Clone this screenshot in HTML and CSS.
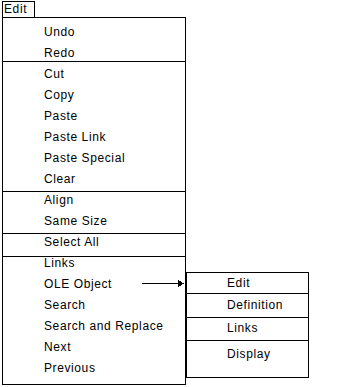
FILE: index.html
```html
<!DOCTYPE html>
<html lang="en">
<head>
<meta charset="utf-8">
<title>Edit menu</title>
<link rel="stylesheet" href="styles.css">
</head>
<body>
<div class="page">
  <div class="tab">Edit</div>
  <div class="menu">
    <div class="group">
      <div class="item">Undo</div>
      <div class="item">Redo</div>
    </div>
    <div class="group g2">
      <div class="item">Cut</div>
      <div class="item">Copy</div>
      <div class="item">Paste</div>
      <div class="item">Paste Link</div>
      <div class="item">Paste Special</div>
      <div class="item">Clear</div>
    </div>
    <div class="group g3">
      <div class="item">Align</div>
      <div class="item">Same Size</div>
    </div>
    <div class="group g4">
      <div class="item">Select All</div>
    </div>
    <div class="group g5">
      <div class="item">Links</div>
      <div class="item item-sub">
        <span>OLE Object</span>
        <svg class="arrow" width="42" height="21" viewBox="0 0 42 21" aria-hidden="true">
          <line x1="0" y1="9.5" x2="37" y2="9.5" stroke="#000" stroke-width="1"/>
          <polygon points="36,6 42,9.5 36,13" fill="#000"/>
        </svg>
      </div>
      <div class="item">Search</div>
      <div class="item">Search and Replace</div>
      <div class="item">Next</div>
      <div class="item">Previous</div>
    </div>
    <div class="submenu">
      <div class="sub-item s-edit">Edit</div>
      <div class="sub-item s-def">Definition</div>
      <div class="sub-item s-links">Links</div>
      <div class="sub-item s-display">Display</div>
    </div>
  </div>
</div>
</body>
</html>
```

FILE: styles.css
```css
html, body {
  margin: 0;
  padding: 0;
  background: #fff;
}

body {
  font-family: "Liberation Sans", Arial, sans-serif;
  font-size: 12px;
  letter-spacing: 0.6px;
  color: #000;
}

.page {
  padding: 1px 0 0 2px;
}

.tab {
  box-sizing: border-box;
  width: 33px;
  height: 16px;
  border: 1px solid #000;
  border-bottom: 0;
  padding-left: 1px;
  line-height: 15px;
}

.menu {
  position: relative;
  box-sizing: border-box;
  width: 184px;
  border: 1px solid #000;
  padding: 4px 0 5px 0;
}

.item {
  height: 21px;
  line-height: 21px;
  padding-left: 41px;
  white-space: nowrap;
}

.item-sub {
  display: flex;
  align-items: flex-start;
}

.arrow {
  display: block;
  margin-left: auto;
  margin-right: 1px;
  shape-rendering: crispEdges;
}

.group + .group {
  border-top: 1px solid #000;
}

.g2 { margin-top: -3px; }
.g2 > .item:first-child { margin-top: 2px; }

.g3, .g4 { margin-top: 1px; }
.g3 > .item:first-child,
.g4 > .item:first-child { margin-top: -2px; }

.g5 { margin-top: 3px; }
.g5 > .item:first-child { margin-top: -4px; }

.submenu {
  position: absolute;
  left: 183px;
  top: 254px;
  width: 123px;
  box-sizing: border-box;
  border: 1px solid #000;
  background: #fff;
}

.sub-item {
  line-height: 21px;
  padding-left: 40px;
  white-space: nowrap;
}

.sub-item + .sub-item {
  border-top: 1px solid #000;
}

.s-edit { height: 20px; }
.s-def { height: 22px; padding-top: 1px; }
.s-links { height: 22px; }
.s-display { height: 33px; padding-top: 3px; }
```
